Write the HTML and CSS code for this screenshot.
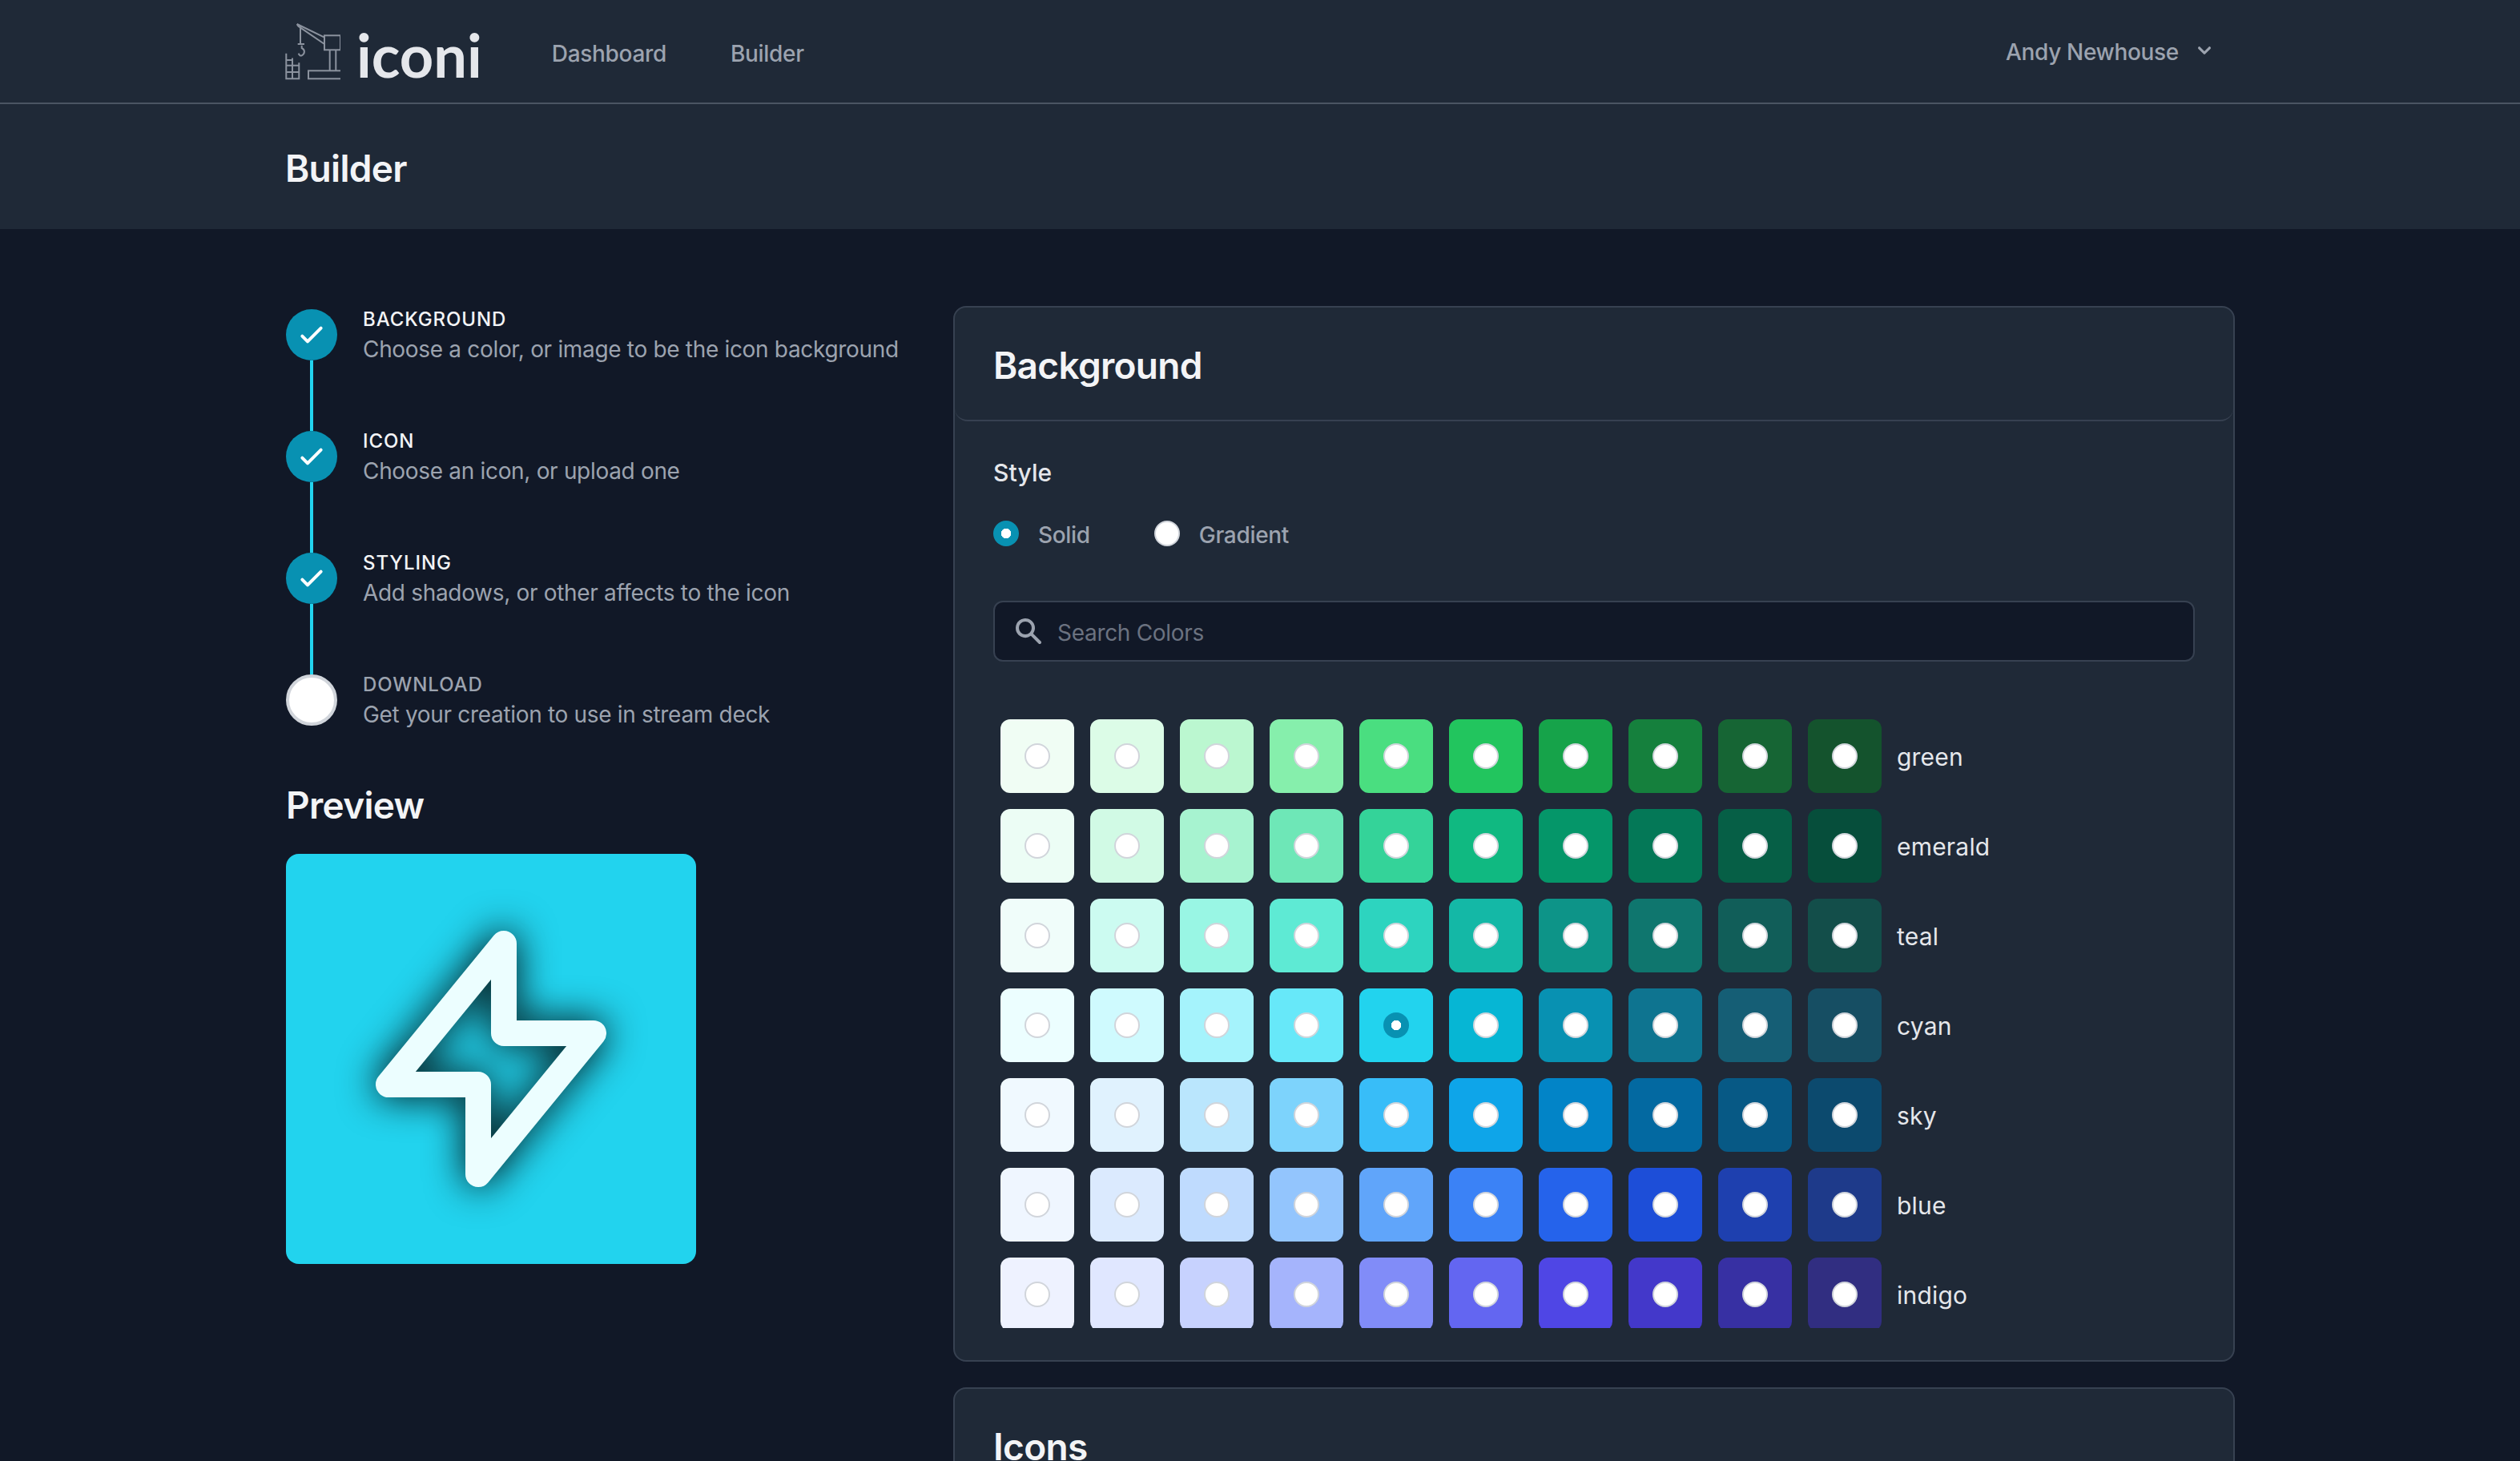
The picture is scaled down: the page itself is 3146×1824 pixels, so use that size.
FILE: index.html
```html
<!DOCTYPE html>
<html lang="en">
<head>
<meta charset="utf-8">
<title>iconi Builder</title>
<link rel="stylesheet" href="styles.css">
</head>
<body>
<header class="nav">
  <a class="brand">
    <svg class="brand-mark" width="80" height="78" viewBox="0 0 80 78" fill="none" stroke="#8b929e" stroke-width="2">
      <path d="M25.7 5 60 21.7M27.3 7.7 60 30M25.7 5l1.6 2.7"/>
      <rect x="60" y="19.3" width="20" height="18"/>
      <path d="M66.7 37.3v26M74.3 37.3v26"/>
      <rect x="40" y="63.3" width="43.3" height="10"/>
      <path d="M30 8.3V30M26.7 30H35M31.7 31.7V35C36 37 36 42 31.7 44.3C30 45 28.5 44 27.7 41.7"/>
      <path d="M12.3 41.7v31.6h16V53.3M20 47.5v25.8M12.3 50H20M12.3 56.7h16M12.3 65h16"/>
    </svg>
    <span class="brand-name">iconi</span>
  </a>
  <nav class="nav-links">
    <a>Dashboard</a>
    <a>Builder</a>
  </nav>
  <div class="user">
    <span>Andy Newhouse</span>
    <svg width="32" height="32" viewBox="0 0 20 20" fill="currentColor"><path fill-rule="evenodd" clip-rule="evenodd" d="M5.293 7.293a1 1 0 011.414 0L10 10.586l3.293-3.293a1 1 0 111.414 1.414l-4 4a1 1 0 01-1.414 0l-4-4a1 1 0 010-1.414z"/></svg>
  </div>
</header>
<div class="page-head"><h1>Builder</h1></div>
<main class="layout">
  <aside class="side">
    <ol class="steps">
      <li class="step done">
        <div class="rail"><span class="dot"><svg width="40" height="40" viewBox="0 0 24 24" fill="none" stroke="#fff" stroke-width="2.4" stroke-linecap="round" stroke-linejoin="round"><path d="M5 13l4 4L19 7"/></svg></span><span class="line"></span></div>
        <div class="step-text"><div class="step-label">Background</div><div class="step-desc">Choose a color, or image to be the icon background</div></div>
      </li>
      <li class="step done">
        <div class="rail"><span class="dot"><svg width="40" height="40" viewBox="0 0 24 24" fill="none" stroke="#fff" stroke-width="2.4" stroke-linecap="round" stroke-linejoin="round"><path d="M5 13l4 4L19 7"/></svg></span><span class="line"></span></div>
        <div class="step-text"><div class="step-label">Icon</div><div class="step-desc">Choose an icon, or upload one</div></div>
      </li>
      <li class="step done">
        <div class="rail"><span class="dot"><svg width="40" height="40" viewBox="0 0 24 24" fill="none" stroke="#fff" stroke-width="2.4" stroke-linecap="round" stroke-linejoin="round"><path d="M5 13l4 4L19 7"/></svg></span><span class="line"></span></div>
        <div class="step-text"><div class="step-label">Styling</div><div class="step-desc">Add shadows, or other affects to the icon</div></div>
      </li>
      <li class="step todo">
        <div class="rail"><span class="dot"></span></div>
        <div class="step-text"><div class="step-label">Download</div><div class="step-desc">Get your creation to use in stream deck</div></div>
      </li>
    </ol>
    <h2 class="preview-title">Preview</h2>
    <div class="preview">
      <svg class="preview-bolt" width="384" height="384" viewBox="0 0 24 24" fill="none" stroke="#ecfeff" stroke-width="2" stroke-linecap="round" stroke-linejoin="round"><path d="M13 10V3L4 14h7v7l9-11h-7z"/></svg>
    </div>
  </aside>
  <section class="content">
    <div class="card">
      <div class="card-head"><h2>Background</h2></div>
      <div class="card-body">
        <div class="field-label">Style</div>
        <div class="radios">
          <label class="radio-opt"><input class="radio" type="radio" name="style" checked><span>Solid</span></label>
          <label class="radio-opt"><input class="radio" type="radio" name="style"><span>Gradient</span></label>
        </div>
        <div class="search">
          <svg width="40" height="40" viewBox="0 0 20 20" fill="currentColor"><path fill-rule="evenodd" clip-rule="evenodd" d="M8 4a4 4 0 100 8 4 4 0 000-8zM2 8a6 6 0 1110.89 3.476l4.817 4.817a1 1 0 01-1.414 1.414l-4.816-4.816A6 6 0 012 8z"/></svg>
          <input type="text" placeholder="Search Colors">
        </div>
        <div class="palette">
          <div class="palette-row">
            <span class="swatch" style="background:#f0fdf4"><input class="radio" type="radio" name="c"></span><span class="swatch" style="background:#dcfce7"><input class="radio" type="radio" name="c"></span><span class="swatch" style="background:#bbf7d0"><input class="radio" type="radio" name="c"></span><span class="swatch" style="background:#86efac"><input class="radio" type="radio" name="c"></span><span class="swatch" style="background:#4ade80"><input class="radio" type="radio" name="c"></span><span class="swatch" style="background:#22c55e"><input class="radio" type="radio" name="c"></span><span class="swatch" style="background:#16a34a"><input class="radio" type="radio" name="c"></span><span class="swatch" style="background:#15803d"><input class="radio" type="radio" name="c"></span><span class="swatch" style="background:#166534"><input class="radio" type="radio" name="c"></span><span class="swatch" style="background:#14532d"><input class="radio" type="radio" name="c"></span>
            <span class="palette-name">green</span>
          </div>
          <div class="palette-row">
            <span class="swatch" style="background:#ecfdf5"><input class="radio" type="radio" name="c"></span><span class="swatch" style="background:#d1fae5"><input class="radio" type="radio" name="c"></span><span class="swatch" style="background:#a7f3d0"><input class="radio" type="radio" name="c"></span><span class="swatch" style="background:#6ee7b7"><input class="radio" type="radio" name="c"></span><span class="swatch" style="background:#34d399"><input class="radio" type="radio" name="c"></span><span class="swatch" style="background:#10b981"><input class="radio" type="radio" name="c"></span><span class="swatch" style="background:#059669"><input class="radio" type="radio" name="c"></span><span class="swatch" style="background:#047857"><input class="radio" type="radio" name="c"></span><span class="swatch" style="background:#065f46"><input class="radio" type="radio" name="c"></span><span class="swatch" style="background:#064e3b"><input class="radio" type="radio" name="c"></span>
            <span class="palette-name">emerald</span>
          </div>
          <div class="palette-row">
            <span class="swatch" style="background:#f0fdfa"><input class="radio" type="radio" name="c"></span><span class="swatch" style="background:#ccfbf1"><input class="radio" type="radio" name="c"></span><span class="swatch" style="background:#99f6e4"><input class="radio" type="radio" name="c"></span><span class="swatch" style="background:#5eead4"><input class="radio" type="radio" name="c"></span><span class="swatch" style="background:#2dd4bf"><input class="radio" type="radio" name="c"></span><span class="swatch" style="background:#14b8a6"><input class="radio" type="radio" name="c"></span><span class="swatch" style="background:#0d9488"><input class="radio" type="radio" name="c"></span><span class="swatch" style="background:#0f766e"><input class="radio" type="radio" name="c"></span><span class="swatch" style="background:#115e59"><input class="radio" type="radio" name="c"></span><span class="swatch" style="background:#134e4a"><input class="radio" type="radio" name="c"></span>
            <span class="palette-name">teal</span>
          </div>
          <div class="palette-row">
            <span class="swatch" style="background:#ecfeff"><input class="radio" type="radio" name="c"></span><span class="swatch" style="background:#cffafe"><input class="radio" type="radio" name="c"></span><span class="swatch" style="background:#a5f3fc"><input class="radio" type="radio" name="c"></span><span class="swatch" style="background:#67e8f9"><input class="radio" type="radio" name="c"></span><span class="swatch" style="background:#22d3ee"><input class="radio" type="radio" name="c" checked></span><span class="swatch" style="background:#06b6d4"><input class="radio" type="radio" name="c"></span><span class="swatch" style="background:#0891b2"><input class="radio" type="radio" name="c"></span><span class="swatch" style="background:#0e7490"><input class="radio" type="radio" name="c"></span><span class="swatch" style="background:#155e75"><input class="radio" type="radio" name="c"></span><span class="swatch" style="background:#164e63"><input class="radio" type="radio" name="c"></span>
            <span class="palette-name">cyan</span>
          </div>
          <div class="palette-row">
            <span class="swatch" style="background:#f0f9ff"><input class="radio" type="radio" name="c"></span><span class="swatch" style="background:#e0f2fe"><input class="radio" type="radio" name="c"></span><span class="swatch" style="background:#bae6fd"><input class="radio" type="radio" name="c"></span><span class="swatch" style="background:#7dd3fc"><input class="radio" type="radio" name="c"></span><span class="swatch" style="background:#38bdf8"><input class="radio" type="radio" name="c"></span><span class="swatch" style="background:#0ea5e9"><input class="radio" type="radio" name="c"></span><span class="swatch" style="background:#0284c7"><input class="radio" type="radio" name="c"></span><span class="swatch" style="background:#0369a1"><input class="radio" type="radio" name="c"></span><span class="swatch" style="background:#075985"><input class="radio" type="radio" name="c"></span><span class="swatch" style="background:#0c4a6e"><input class="radio" type="radio" name="c"></span>
            <span class="palette-name">sky</span>
          </div>
          <div class="palette-row">
            <span class="swatch" style="background:#eff6ff"><input class="radio" type="radio" name="c"></span><span class="swatch" style="background:#dbeafe"><input class="radio" type="radio" name="c"></span><span class="swatch" style="background:#bfdbfe"><input class="radio" type="radio" name="c"></span><span class="swatch" style="background:#93c5fd"><input class="radio" type="radio" name="c"></span><span class="swatch" style="background:#60a5fa"><input class="radio" type="radio" name="c"></span><span class="swatch" style="background:#3b82f6"><input class="radio" type="radio" name="c"></span><span class="swatch" style="background:#2563eb"><input class="radio" type="radio" name="c"></span><span class="swatch" style="background:#1d4ed8"><input class="radio" type="radio" name="c"></span><span class="swatch" style="background:#1e40af"><input class="radio" type="radio" name="c"></span><span class="swatch" style="background:#1e3a8a"><input class="radio" type="radio" name="c"></span>
            <span class="palette-name">blue</span>
          </div>
          <div class="palette-row">
            <span class="swatch" style="background:#eef2ff"><input class="radio" type="radio" name="c"></span><span class="swatch" style="background:#e0e7ff"><input class="radio" type="radio" name="c"></span><span class="swatch" style="background:#c7d2fe"><input class="radio" type="radio" name="c"></span><span class="swatch" style="background:#a5b4fc"><input class="radio" type="radio" name="c"></span><span class="swatch" style="background:#818cf8"><input class="radio" type="radio" name="c"></span><span class="swatch" style="background:#6366f1"><input class="radio" type="radio" name="c"></span><span class="swatch" style="background:#4f46e5"><input class="radio" type="radio" name="c"></span><span class="swatch" style="background:#4338ca"><input class="radio" type="radio" name="c"></span><span class="swatch" style="background:#3730a3"><input class="radio" type="radio" name="c"></span><span class="swatch" style="background:#312e81"><input class="radio" type="radio" name="c"></span>
            <span class="palette-name">indigo</span>
          </div>
        </div>
      </div>
    </div>
    <div class="card">
      <div class="card-head"><h2>Icons</h2></div>
    </div>
  </section>
</main>
</body>
</html>
```
FILE: styles.css
```css
* { box-sizing: border-box; }
html, body { margin: 0; height: 100%; overflow: hidden; }
body {
  background: #111827;
  color: #f3f4f6;
  font-family: Inter, "Liberation Sans", sans-serif;
  font-size: 28px;
  line-height: 40px;
  letter-spacing: -0.32px;
}
h1, h2 { margin: 0; font-weight: 600; font-size: 46px; line-height: 64px; letter-spacing: -0.7px; color: #f3f4f6; }

.nav {
  display: flex;
  align-items: center;
  height: 130px;
  padding: 0 356px;
  background: #1f2937;
  border-bottom: 2px solid #4b5563;
}
.brand { display: flex; align-items: center; height: 100%; }
.brand-mark { margin-left: -11px; }
.brand-name { margin-left: 20px; margin-top: 10px; font-family: Lato, Inter, sans-serif; font-size: 74px; font-weight: 700; line-height: 80px; letter-spacing: 0; color: #e5e7eb; }
.nav-links { display: flex; gap: 80px; margin-left: 87px; margin-top: 5px; color: #9ca3af; font-weight: 500; }
.user { display: flex; align-items: center; gap: 16px; margin-left: auto; margin-top: 2px; margin-right: 22px; color: #9ca3af; font-weight: 500; }
.user svg { margin-top: -4px; }

.page-head { display: flex; align-items: center; height: 156px; padding: 4px 356px 0; background: #1f2937; }

.layout { display: grid; grid-template-columns: 834px 1600px; padding: 96px 356px 0; }
.side { padding-top: 4px; padding-left: 1px; }
.steps { list-style: none; margin: 0; padding: 0; }
.step { display: flex; gap: 32px; height: 152px; }
.step.todo { height: 64px; }
.rail { display: flex; flex-direction: column; align-items: center; width: 64px; }
.dot { display: flex; flex: none; align-items: center; justify-content: center; width: 64px; height: 64px; border-radius: 50%; background: #0891b2; }
.todo .dot { background: #fff; border: 4px solid #d1d5db; }
.line { flex: 1; width: 4px; background: #22d3ee; }
.step-text { margin-top: -3px; }
.step-label { font-size: 24px; line-height: 32px; font-weight: 500; letter-spacing: 0.9px; text-transform: uppercase; color: #f3f4f6; }
.todo .step-label { color: #9ca3af; }
.step-desc { margin-top: 1px; color: #9ca3af; white-space: nowrap; }

.preview-title { margin-top: 67px; }
.preview { display: flex; align-items: center; justify-content: center; width: 512px; height: 512px; margin-top: 29px; border-radius: 16px; background: #22d3ee; }
.preview-bolt { filter: drop-shadow(0 0 24px rgba(0, 0, 0, 0.95)); }

.card { margin-bottom: 32px; background: #1f2937; border: 2px solid #374151; border-radius: 16px; }
.card-head { display: flex; align-items: center; height: 142px; padding: 4px 48px 0; border-bottom: 2px solid #374151; border-radius: 16px; }
.card-body { padding: 44px 48px 40px; }
.field-label { color: #e5e7eb; font-weight: 500; font-size: 30px; letter-spacing: 0.1px; }
.radios { display: flex; gap: 80px; margin-top: 40px; }
.radio-opt { display: flex; align-items: center; gap: 24px; height: 32px; color: #9ca3af; font-weight: 500; }
.radio-opt span { padding-top: 3px; }
.radio {
  appearance: none;
  flex: none;
  width: 32px;
  height: 32px;
  margin: 0;
  border: 2px solid #d1d5db;
  border-radius: 50%;
  background: #fff;
}
.radio:checked { border: 0; background: radial-gradient(circle, #fff 6px, #0891b2 6.5px); }

.search { display: flex; align-items: center; gap: 16px; height: 76px; margin-top: 68px; padding: 0 22px; background: #111827; border: 2px solid #374151; border-radius: 12px; color: #9ca3af; }
.search input { flex: 1; border: 0; outline: 0; padding: 3px 0 0; background: transparent; color: #f3f4f6; font: inherit; letter-spacing: -0.3px; }
.search input::placeholder { color: #6b7280; opacity: 1; }

.palette { display: flex; flex-direction: column; gap: 20px; height: 792px; margin-top: 40px; padding: 32px 0 0 9px; overflow: hidden; }
.palette-row { display: flex; flex: none; align-items: center; gap: 20px; height: 92px; }
.swatch { display: flex; align-items: center; justify-content: center; width: 92px; height: 92px; border-radius: 12px; }
.palette-name { margin-left: -1px; padding-top: 1px; font-size: 30px; line-height: 48px; letter-spacing: 0.2px; color: #e5e7eb; }
```
